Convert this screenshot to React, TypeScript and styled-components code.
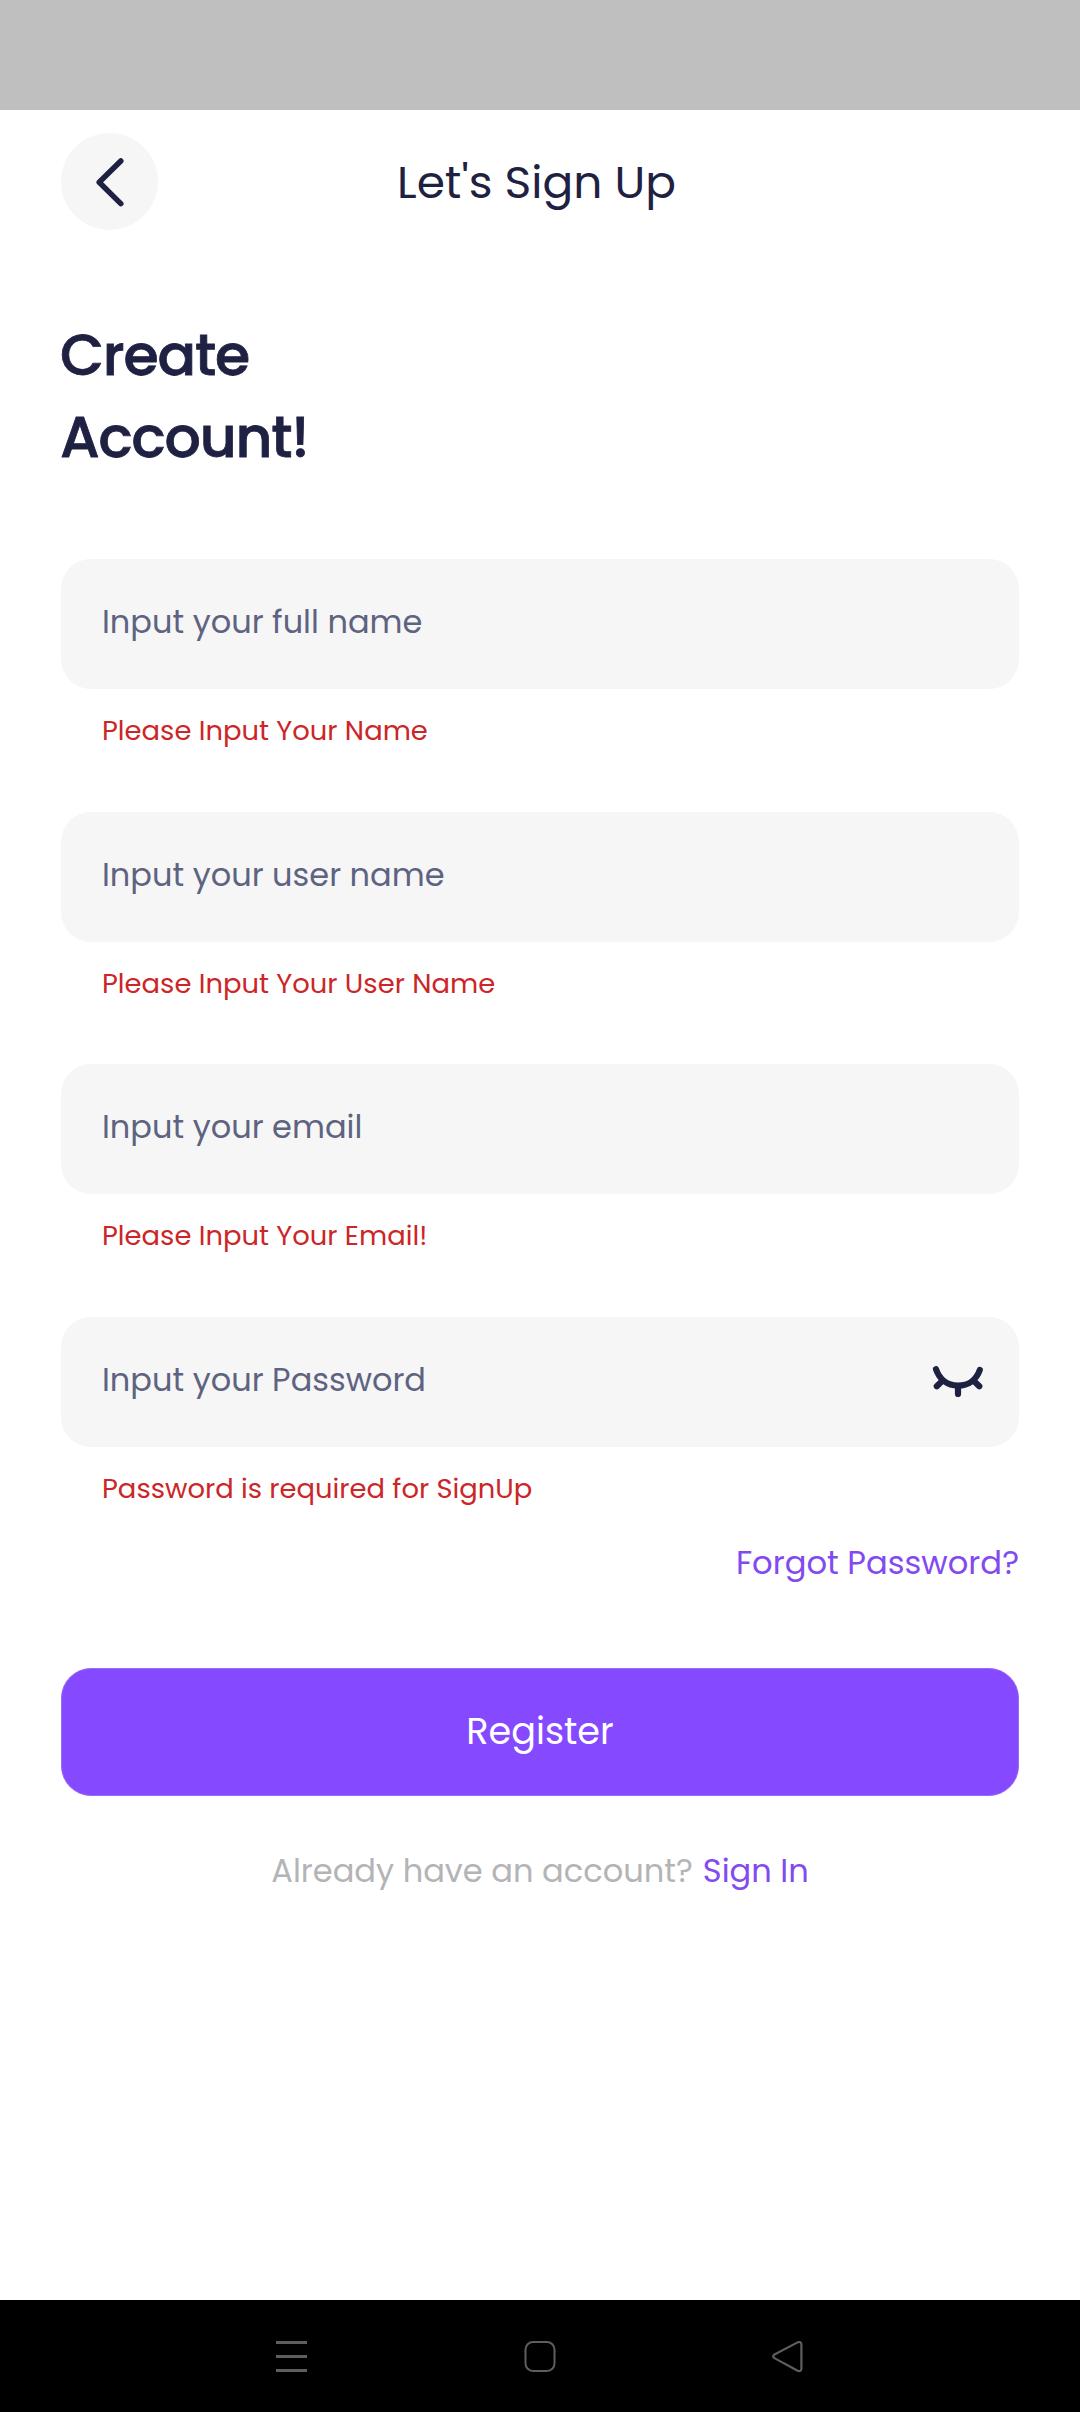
import React from "react";
import styled, { createGlobalStyle } from "styled-components";

const ink = "#1f2142";
const violet = "#8549ff";
const linkViolet = "#824aef";

const GlobalStyle = createGlobalStyle`
  *, *::before, *::after { box-sizing: border-box; }
  body {
    margin: 0;
    background: #ffffff;
    font-family: "Poppins", "Inter", sans-serif;
    color: ${ink};
  }
`;

const Screen = styled.div`
  display: flex;
  flex-direction: column;
  min-height: 2412px;
  background: #ffffff;
`;

const StatusBar = styled.div`
  height: 110px;
  background: #bfbfbf;
`;

const Content = styled.main`
  flex: 1;
  display: flex;
  flex-direction: column;
  padding: 23px 61px 0;
`;

const Header = styled.header`
  display: flex;
  align-items: center;
  gap: 239px;
  height: 97px;
`;

const BackButton = styled.button`
  display: flex;
  align-items: center;
  justify-content: center;
  width: 97px;
  height: 97px;
  padding: 0;
  border: 0;
  border-radius: 50%;
  background: #f6f6f6;
`;

const Title = styled.h1`
  margin: 0;
  font-size: 45.5px;
  font-weight: 400;
  line-height: 68px;
  white-space: nowrap;
`;

const Heading = styled.h2`
  margin: 84px 0 0 -1px;
  font-size: 57px;
  font-weight: 500;
  line-height: 82px;
  letter-spacing: -1.2px;
  -webkit-text-stroke: 0.8px ${ink};
`;

const Form = styled.form`
  display: flex;
  flex-direction: column;
  margin-top: 81px;
`;

const Field = styled.div`
  height: 252.5px;
`;

const InputBox = styled.label`
  display: flex;
  align-items: center;
  height: 130px;
  padding: 0 34px 4px 41px;
  border-radius: 30px;
  background: #f6f6f6;
`;

const Input = styled.input`
  flex: 1;
  min-width: 0;
  height: 48px;
  padding: 0;
  border: 0;
  outline: 0;
  background: transparent;
  color: ${ink};
  font: 400 32px/48px "Poppins", "Inter", sans-serif;

  &::placeholder {
    color: #5d6380;
    opacity: 1;
  }
`;

const ErrorText = styled.p`
  margin: 21px 0 0 41px;
  color: #cb2628;
  font-size: 27.4px;
  line-height: 41px;
  white-space: nowrap;
`;

const ForgotLink = styled.a`
  align-self: flex-end;
  margin-top: -30px;
  color: ${linkViolet};
  font-size: 32.2px;
  line-height: 48px;
`;

const RegisterButton = styled.button`
  height: 128px;
  margin-top: 80.5px;
  padding: 0;
  border: 1px solid #9a6bf6;
  border-radius: 30px;
  background: ${violet};
  color: #ffffff;
  font: 400 36.6px/54px "Poppins", "Inter", sans-serif;
`;

const SignInRow = styled.p`
  display: flex;
  justify-content: center;
  gap: 10px;
  margin: 51px 0 0;
  color: #b3b4b6;
  font-size: 32.1px;
  line-height: 48px;
`;

const SignInLink = styled.a`
  color: ${linkViolet};
`;

const NavBar = styled.nav`
  display: flex;
  align-items: center;
  justify-content: space-between;
  height: 112px;
  padding: 0 276px 0 275px;
  background: #000000;
`;

const NavIcon = styled.svg`
  width: 33px;
  height: 33px;
  fill: none;
  stroke: #5e5e5e;
`;

const ChevronLeft = () => (
  <svg width="40" height="56" viewBox="0 0 40 56" fill="none" stroke={ink} strokeWidth="5.5" strokeLinecap="round" strokeLinejoin="round">
    <path d="M30.8 7 L9.2 28.3 L30.8 49.6" />
  </svg>
);

const ClosedEye = () => (
  <svg width="54" height="36" viewBox="0 0 54 36" fill="none" stroke={ink} strokeWidth="6.2" strokeLinecap="round">
    <path d="M5 7.3 C8.6 17.6 16.5 23.6 27 23.6 C37.5 23.6 45.4 17.6 48.8 8" />
    <path d="M10.5 19.6 L5.8 24.3 M43.6 19.6 L48.3 24.3 M27 24 V32" />
  </svg>
);

const fields = [
  { name: "fullName", placeholder: "Input your full name", error: "Please Input Your Name" },
  { name: "userName", placeholder: "Input your user name", error: "Please Input Your User Name" },
  { name: "email", placeholder: "Input your email", error: "Please Input Your Email!" },
  { name: "password", placeholder: "Input your Password", error: "Password is required for SignUp", secret: true },
];

export default function App() {
  return (
    <Screen>
      <GlobalStyle />
      <StatusBar />
      <Content>
        <Header>
          <BackButton type="button" aria-label="Back">
            <ChevronLeft />
          </BackButton>
          <Title>Let's Sign Up</Title>
        </Header>
        <Heading>
          Create
          <br />
          Account!
        </Heading>
        <Form onSubmit={(e) => e.preventDefault()}>
          {fields.map((f) => (
            <Field key={f.name}>
              <InputBox>
                <Input name={f.name} type={f.secret ? "password" : "text"} placeholder={f.placeholder} />
                {f.secret && <ClosedEye />}
              </InputBox>
              <ErrorText>{f.error}</ErrorText>
            </Field>
          ))}
          <ForgotLink>Forgot Password?</ForgotLink>
          <RegisterButton type="submit">Register</RegisterButton>
        </Form>
        <SignInRow>
          <span>Already have an account?</span>
          <SignInLink>Sign In</SignInLink>
        </SignInRow>
      </Content>
      <NavBar>
        <NavIcon viewBox="0 0 33 33" strokeWidth="3">
          <path d="M1 2.5 H32 M1 16.5 H32 M1 30.5 H32" />
        </NavIcon>
        <NavIcon viewBox="0 0 33 33" strokeWidth="2">
          <rect x="2.5" y="2" width="29" height="29" rx="7.5" />
        </NavIcon>
        <NavIcon viewBox="0 0 33 33" strokeWidth="2.2" strokeLinejoin="round">
          <path d="M26.6 2.4 L3 14.8 Q1.2 16.3 3 17.9 L26.6 30.8 Q30.2 32 30.4 28.6 V4.6 Q30.2 1 26.6 2.4 Z" />
        </NavIcon>
      </NavBar>
    </Screen>
  );
}
